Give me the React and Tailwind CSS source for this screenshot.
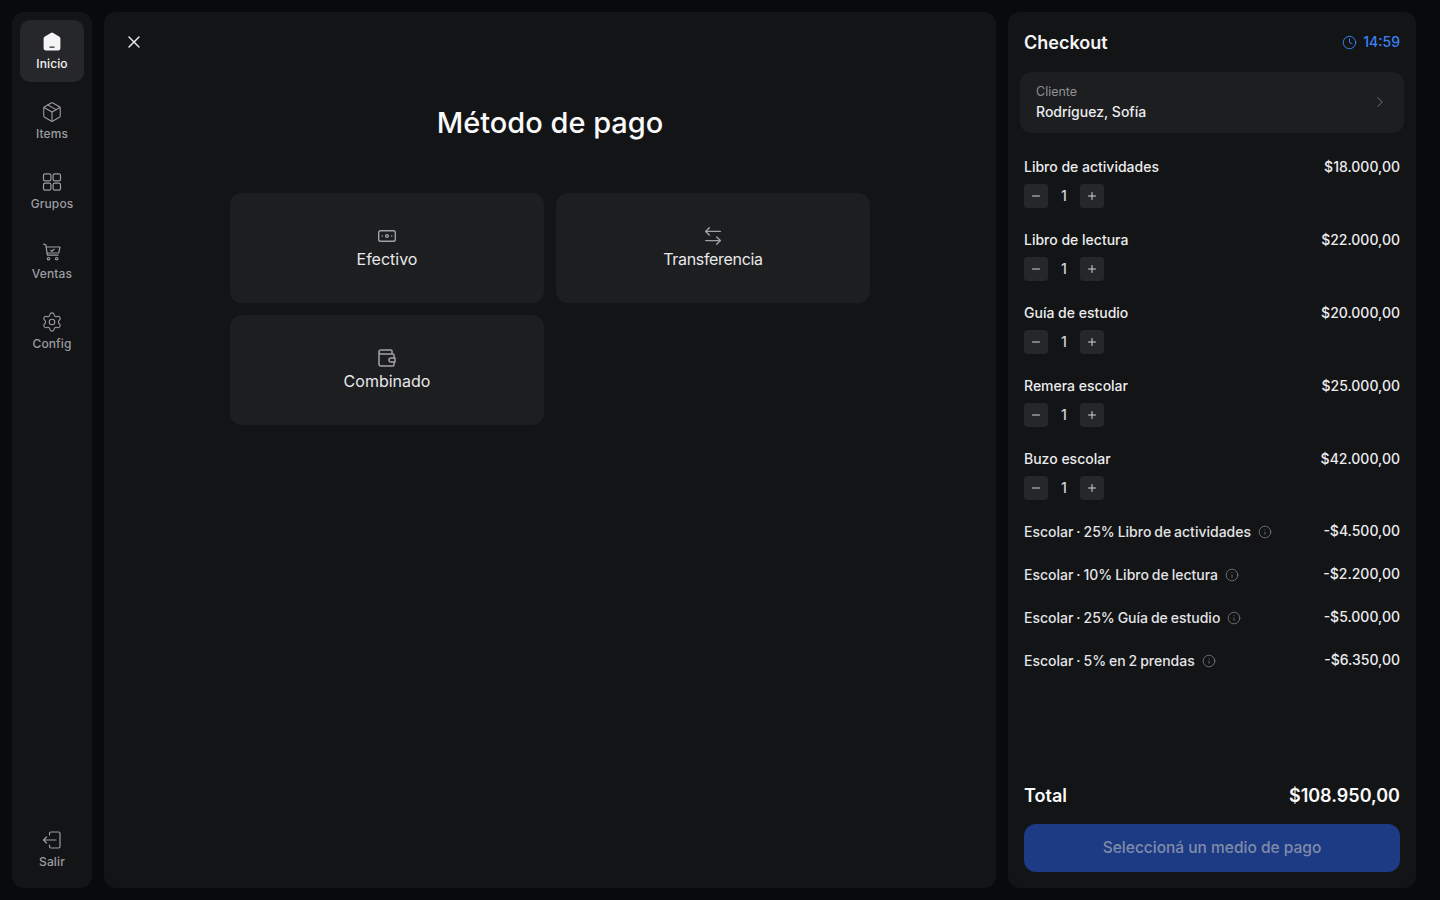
import React from "react";
import { X, ArrowLeftRight, Settings, ChevronRight, Clock, Info, Minus, Plus, Package } from "lucide-react";
import { TbWallet } from "react-icons/tb";

const HomeIcon = () => (
  <svg width="24" height="24" viewBox="0 0 20 20" fill="#f4f4f5">
    <path fillRule="evenodd" d="M9 2.400a1.700 1.700 0 0 1 2 0l5.200 3.300c.5.3.8.8.8 1.400v8.200c0 1-.8 1.700-1.700 1.700H4.700c-1 0-1.700-.8-1.700-1.700V7.100c0-.6.3-1.100.8-1.400L9 2.400ZM8.300 13.800a.5.5 0 0 0 0 1h3.400a.5.5 0 0 0 0-1H8.300Z" />
  </svg>
);
const GridIcon = () => (
  <svg width="20" height="20" viewBox="0 0 20 20" fill="none" stroke="currentColor" strokeWidth="1.2">
    <rect x="1.500" y="1.800" width="7.400" height="7" rx="1.600" />
    <rect x="11.100" y="1.800" width="7.400" height="7" rx="1.600" />
    <rect x="1.500" y="11.200" width="7.400" height="7" rx="1.600" />
    <rect x="11.100" y="11.200" width="7.400" height="7" rx="1.600" />
  </svg>
);
const CartIcon = () => (
  <svg width="20" height="20" viewBox="0 0 20 20" fill="none" stroke="currentColor" strokeWidth="1.2" strokeLinecap="round" strokeLinejoin="round">
    <path d="M1.500 2 3.800 2.900 5.400 13.200H16" />
    <path d="M4.300 5h13.700l-1.300 6H5.200" />
    <path d="m8.700 8.300 1.200 1 2.200-2" />
    <circle cx="6.600" cy="16.700" r="1.200" />
    <circle cx="14.700" cy="16.700" r="1.200" />
  </svg>
);
const ExitIcon = () => (
  <svg width="20" height="20" viewBox="0 0 20 20" fill="none" stroke="currentColor" strokeWidth="1.2" strokeLinecap="round" strokeLinejoin="round">
    <path d="M7.500 5V3.500A1.500 1.500 0 0 1 9 2h7.500A1.500 1.500 0 0 1 18 3.500v13a1.500 1.500 0 0 1-1.500 1.500H9a1.500 1.500 0 0 1-1.500-1.500V15" />
    <path d="M14 10H1.500M4.500 7l-3 3 3 3" />
  </svg>
);
const CashIcon = () => (
  <svg width="20" height="20" viewBox="0 0 20 20" fill="none" stroke="currentColor" strokeWidth="1.4" strokeLinecap="round">
    <rect x="1.700" y="4.700" width="16.600" height="10.600" rx="1.800" />
    <circle cx="10" cy="10" r="1.400" />
    <path d="M5.300 10h.01M14.700 10h.01" strokeWidth="1.600" />
  </svg>
);

const NavItem = ({ icon, label, active }) => (
  <div className={`flex h-[62px] w-16 flex-col items-center justify-center gap-1 rounded-[10px] pt-[2px] ${active ? "bg-[#26272a] text-[#f4f4f5]" : "text-[#9c9ca1]"}`}>
    <span className="flex h-5 items-center justify-center">{icon}</span>
    <span className="text-xs leading-4 font-medium tracking-[0.01em]">{label}</span>
  </div>
);

const PayCard = ({ icon, label, labelClass = "" }) => (
  <div className="flex h-[110px] flex-col items-center justify-center rounded-xl bg-[#1d1e20] pt-[1px]">
    <span className="-mt-px mb-px flex h-5 items-center justify-center text-[#a1a1a6]">{icon}</span>
    <span className={`text-base leading-6 text-[#e8e8ea] ${labelClass}`}>{label}</span>
  </div>
);

const Item = ({ name, price }) => (
  <div className="h-[73px]">
    <div className="flex h-5 items-center justify-between text-sm font-medium text-[#ececee]">
      <span>{name}</span>
      <span>{price}</span>
    </div>
    <div className="mt-[7px] flex items-center text-[#d4d4d8]">
      <span className="flex size-6 items-center justify-center rounded bg-[#26272a]"><Minus size={12} strokeWidth={2} /></span>
      <span className="w-8 text-center text-sm leading-5 font-medium">1</span>
      <span className="flex size-6 items-center justify-center rounded bg-[#26272a]"><Plus size={12} strokeWidth={2} /></span>
    </div>
  </div>
);

const Discount = ({ name, price }) => (
  <div className="flex h-[43px] items-start justify-between">
    <span className="flex h-5 items-center gap-[7px] text-sm font-medium text-[#e4e4e7] [word-spacing:-0.8px]">
      {name}
      <Info size={14} strokeWidth={1.2} className="text-[#8a8a90]" />
    </span>
    <span className="text-sm leading-[18px] font-medium text-[#ececee]">{price}</span>
  </div>
);

export default function App() {
  return (
    <div className="flex h-[900px] w-[1440px] gap-3 overflow-hidden bg-[#090a0c] p-3 font-['Inter',sans-serif]">
      <aside className="flex w-20 flex-col items-center justify-between rounded-xl bg-[#131416] py-2">
        <div className="flex flex-col gap-2">
          <NavItem active icon={<HomeIcon />} label="Inicio" />
          <NavItem icon={<Package size={22} strokeWidth={1.2} />} label="Items" />
          <NavItem icon={<GridIcon />} label="Grupos" />
          <NavItem icon={<CartIcon />} label="Ventas" />
          <NavItem icon={<Settings size={22} strokeWidth={1.2} />} label="Config" />
        </div>
        <NavItem icon={<ExitIcon />} label="Salir" />
      </aside>

      <main className="flex w-[892px] flex-col rounded-xl bg-[#131416]">
        <div className="flex h-[60px] items-center pl-5 text-[#f0f0f2]">
          <X size={20} strokeWidth={1.6} />
        </div>
        <h1 className="mt-[33px] text-center text-[29px] leading-9 font-medium text-[#fafafa]">Método de pago</h1>
        <div className="mx-auto mt-[52px] grid w-[640px] grid-cols-2 gap-3">
          <PayCard icon={<CashIcon />} label="Efectivo" />
          <PayCard icon={<ArrowLeftRight size={22} strokeWidth={1.5} />} label="Transferencia" labelClass="tracking-[-0.02em]" />
          <PayCard icon={<TbWallet size={24} strokeWidth={1.5} />} label="Combinado" />
        </div>
      </main>

      <section className="flex w-[408px] flex-col rounded-xl bg-[#131416] p-4">
        <div className="flex h-[28px] items-center justify-between">
          <span className="pt-[2px] text-lg font-semibold text-[#f4f4f5]">Checkout</span>
          <span className="flex items-center gap-1.5 text-sm font-medium text-[#3b82f6]"><Clock size={15} strokeWidth={1.5} />14:59</span>
        </div>
        <div className="-mx-1 mt-4 flex h-[61px] items-center justify-between rounded-xl bg-[#1d1e20] pr-[15px] pl-4">
          <div className="-mt-[2px]">
            <div className="text-[12.5px] leading-5 text-[#8f8f95]">Cliente</div>
            <div className="text-sm leading-5 font-medium text-[#ececee]">Rodríguez, Sofía</div>
          </div>
          <ChevronRight size={18} strokeWidth={1.4} className="-mt-[2px] text-[#66666b]" />
        </div>
        <div className="mt-6">
          <Item name="Libro de actividades" price="$18.000,00" />
          <Item name="Libro de lectura" price="$22.000,00" />
          <Item name="Guía de estudio" price="$20.000,00" />
          <Item name="Remera escolar" price="$25.000,00" />
          <Item name="Buzo escolar" price="$42.000,00" />
          <Discount name="Escolar · 25% Libro de actividades" price="-$4.500,00" />
          <Discount name="Escolar · 10% Libro de lectura" price="-$2.200,00" />
          <Discount name="Escolar · 25% Guía de estudio" price="-$5.000,00" />
          <Discount name="Escolar · 5% en 2 prendas" price="-$6.350,00" />
        </div>
        <div className="mt-auto flex h-7 items-center justify-between pt-[2px] text-lg font-semibold text-[#fafafa]">
          <span>Total</span>
          <span>$108.950,00</span>
        </div>
        <div className="mt-[15px] flex h-12 items-center justify-center rounded-xl bg-[#1d3a85] pb-[1px] text-[15.5px] font-medium text-[#7f8ca8]">
          Seleccioná un medio de pago
        </div>
      </section>
    </div>
  );
}
